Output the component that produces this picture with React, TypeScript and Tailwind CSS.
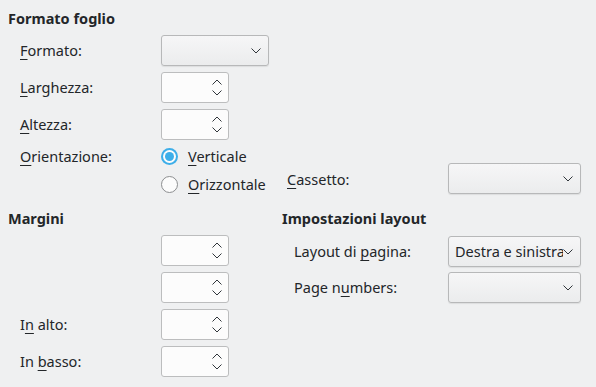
import React from 'react';

const Chevron = ({ up = false }: { up?: boolean }) => (
  <svg width="10" height="6" viewBox="0 0 10 6" className="block">
    <path
      d={up ? 'M0.5 5.5 L5 1 L9.5 5.5' : 'M0.5 0.5 L5 5 L9.5 0.5'}
      fill="none"
      stroke="#31363b"
      strokeWidth="1"
    />
  </svg>
);

const U = ({ children }: { children: React.ReactNode }) => (
  <span className="underline underline-offset-[3px] decoration-1">{children}</span>
);

const Combo = ({ value = '', width = 'w-[133px]' }: { value?: string; width?: string }) => (
  <div
    className={`${width} h-[31px] flex items-center rounded-[3px] border border-[#b7b8b9] bg-gradient-to-b from-[#f6f6f7] to-[#ebeced] shadow-[0_1px_1px_rgba(0,0,0,0.08)] pl-[6px] pr-[7px]`}
  >
    <div className="flex-1 overflow-hidden whitespace-nowrap">{value}</div>
    <Chevron />
  </div>
);

const Spin = () => (
  <div className="w-[68px] h-[31px] flex items-center justify-end rounded-[3px] border border-[#bcbdbe] bg-[#fcfcfc] pr-[6px]">
    <div className="flex flex-col gap-[5px]">
      <Chevron up />
      <Chevron />
    </div>
  </div>
);

const Radio = ({ checked = false }: { checked?: boolean }) =>
  checked ? (
    <div className="w-[17px] h-[17px] rounded-full bg-[#3daee9] flex items-center justify-center">
      <div className="w-[13px] h-[13px] rounded-full bg-[#fcfcfc] flex items-center justify-center">
        <div className="w-[9px] h-[9px] rounded-full bg-[#3daee9]" />
      </div>
    </div>
  ) : (
    <div className="w-[17px] h-[17px] rounded-full border border-[#8c8e90] bg-[#fcfcfc]" />
  );

const App = () => {
  return (
    <div
      className="w-[596px] h-[387px] bg-[#eff0f1] text-[#232629] text-[14.5px] leading-[19px] pl-[8px] pt-[9px] overflow-hidden"
      style={{ fontFamily: '"Noto Sans", sans-serif' }}
    >
      {/* Formato foglio */}
      <div className="flex items-end">
        <div className="w-[274px]">
          <div className="font-bold">Formato foglio</div>
          <div className="pl-3 mt-[7px] grid grid-cols-[141px_auto] gap-y-[6px] items-center">
            <div>
              <U>F</U>ormato:
            </div>
            <Combo width="w-[108px]" />
            <div>
              <U>L</U>arghezza:
            </div>
            <Spin />
            <div>
              <U>A</U>ltezza:
            </div>
            <Spin />
          </div>
          <div className="pl-3 mt-[2px] grid grid-cols-[141px_auto] items-center">
            <div className="h-[28px] flex items-center">
              <U>O</U>rientazione:
            </div>
            <div className="h-[28px] flex items-center gap-[10px]">
              <Radio checked />
              <span>
                <U>V</U>erticale
              </span>
            </div>
            <div />
            <div className="h-[28px] flex items-center gap-[10px]">
              <Radio />
              <span>
                <U>O</U>rizzontale
              </span>
            </div>
          </div>
        </div>
        <div className="flex items-center mb-[4px] ml-[5px]">
          <div className="w-[161px] pt-[2px]">
            <U>C</U>assetto:
          </div>
          <Combo />
        </div>
      </div>

      {/* Margini / Impostazioni layout */}
      <div className="flex mt-[11px]">
        <div className="w-[274px]">
          <div className="font-bold">Margini</div>
          <div className="pl-3 mt-[7px] grid grid-cols-[141px_auto] gap-y-[6px] items-center">
            <div />
            <Spin />
            <div />
            <Spin />
            <div>
              I<U>n</U> alto:
            </div>
            <Spin />
            <div>
              In <U>b</U>asso:
            </div>
            <Spin />
          </div>
        </div>
        <div>
          <div className="font-bold">Impostazioni layout</div>
          <div className="pl-3 mt-[8px] grid grid-cols-[154px_auto] gap-y-[5px] items-center">
            <div>
              Layout di <U>p</U>agina:
            </div>
            <Combo value="Destra e sinistra" />
            <div>
              Page n<U>u</U>mbers:
            </div>
            <Combo />
          </div>
        </div>
      </div>
    </div>
  );
};

export default App;
